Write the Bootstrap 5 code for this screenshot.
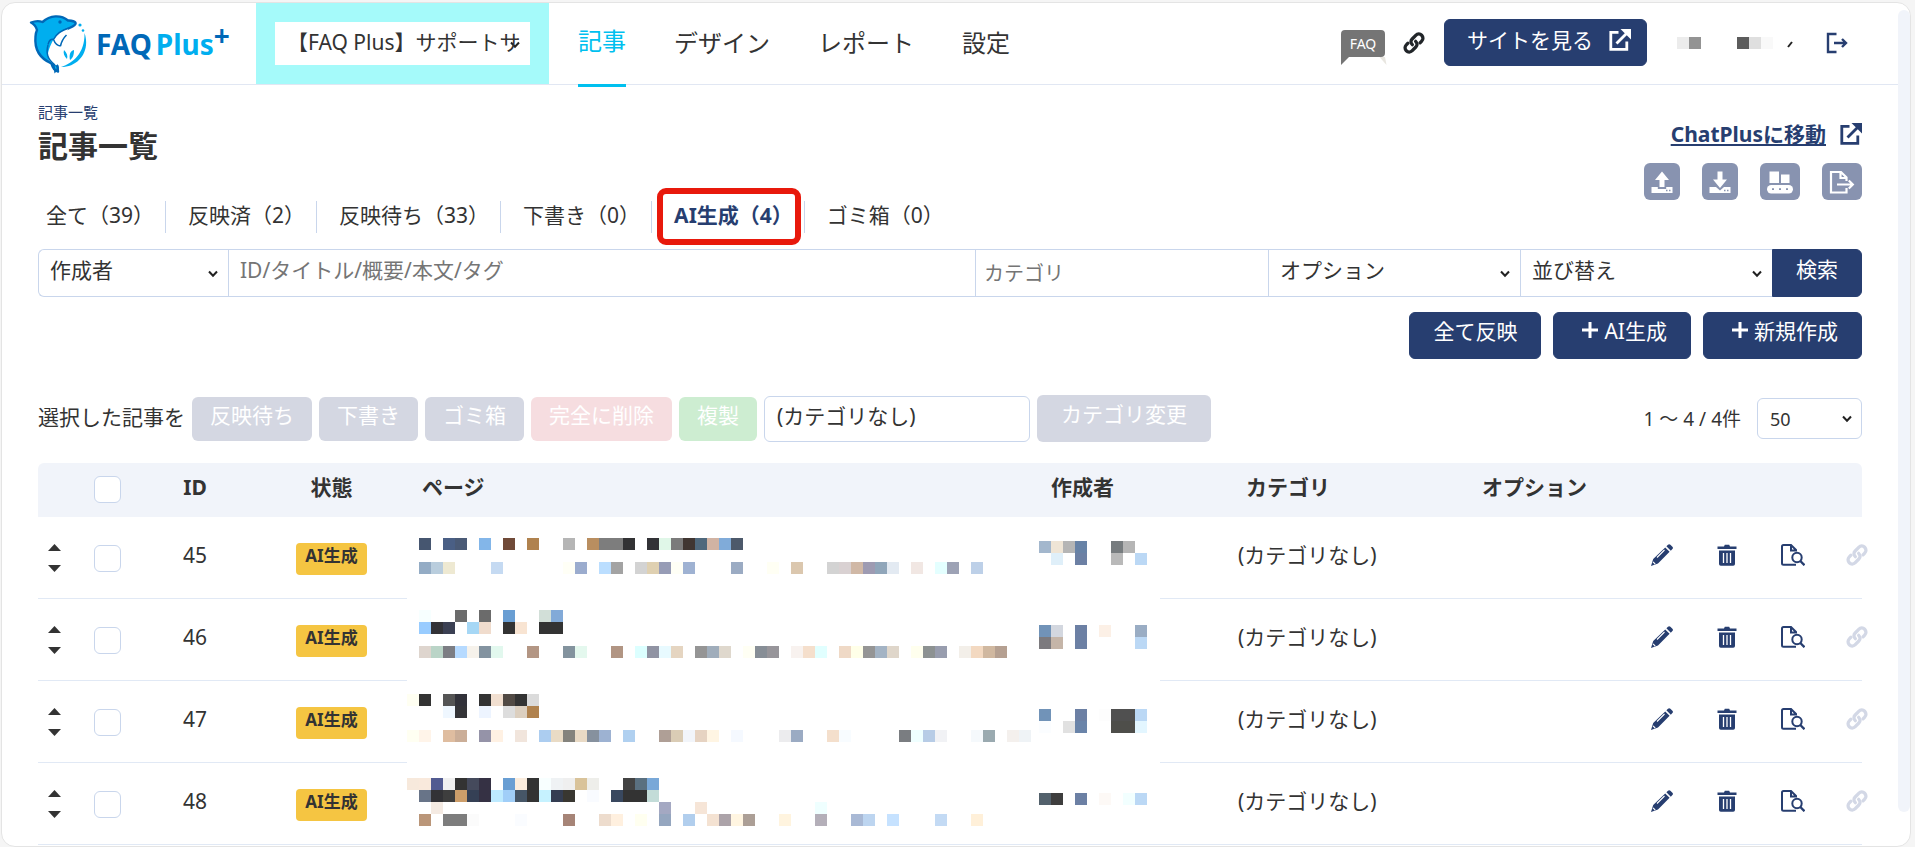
<!DOCTYPE html>
<html lang="ja">
<head>
<meta charset="utf-8">
<meta name="viewport" content="width=device-width, initial-scale=1">
<title>記事一覧 - FAQ Plus</title>
<link href="https://cdn.jsdelivr.net/npm/bootstrap@5.3.0/dist/css/bootstrap.min.css" rel="stylesheet">
<style>
:root { --navy:#273e70; --ink:#333; --line:#c9d6ec; --soft:#f1f4fa; --sky:#00c0ef; }
body { background:#f5f5f5; color:var(--ink); font-family:"Noto Sans","Noto Sans CJK JP",sans-serif; font-size:21px; line-height:28px; }
button, input, select { font-family:inherit; }
a { color:var(--navy); }
.app-frame { margin:2px 4px 0 1px; min-height:calc(100vh - 2px); background:#fff; border:1px solid #e4e4e4; border-radius:14px; }
.app-scroll { width:12px; margin:7px 0 34px; background:var(--soft); border-radius:6px; }
.app-header { height:82px; border-bottom:1px solid #e1e7f3; }
.brand-box { width:254px; padding-left:27px; }
.brand-box svg { width:58px; height:60px; }
.brand-name { font-weight:700; font-size:28px; line-height:36px; margin-left:9px; }
.brand-name sup { font-size:28px; line-height:0; top:-9px; }
.c-blue { color:#0068b7; } .c-cyan { color:#00aeef; }
.site-box { width:293px; background:#a5fafa; padding:19px; }
.form-select { --bs-form-select-bg-img:url("data:image/svg+xml,%3Csvg xmlns='http://www.w3.org/2000/svg' viewBox='0 0 10 8'%3E%3Cpath d='M1 1.5 5 5.8 9 1.5' fill='none' stroke='%23222' stroke-width='2'/%3E%3C/svg%3E"); background-size:10px 8px; }
.form-select, .form-control { font-size:21px; line-height:28px; color:var(--ink); border-color:var(--line); }
.form-control::placeholder { color:#757575; }
.site-box .form-select { height:43px; border:0; border-radius:0; padding:4px 10px 8px 12px; background-position:right 10px top 19px; text-overflow:clip; }
.main-nav { gap:48px; margin-left:29px; height:84px; }
.main-nav .nav-link { padding:22px 0 27px; color:var(--ink); font-size:24px; line-height:35px; }
.main-nav .nav-link.active { color:var(--sky); border-bottom:3px solid var(--sky); padding:20px 0 26px; }
.head-tools { padding:0 50px 2px 0; }
.icon-btn { background:none; border:0; padding:0; line-height:0; color:var(--navy); }
.icon-btn svg { width:22px; height:22px; }
.icon-btn .faq-bubble { width:46px; height:36px; margin-top:10px; }
.icon-btn .doc-icon { width:24px; }
.btn-navy { --bs-btn-bg:var(--navy); --bs-btn-color:#fff; --bs-btn-border-color:var(--navy); --bs-btn-hover-bg:#1d3059; --bs-btn-hover-color:#fff; }
.btn { font-size:21px; line-height:28px; border-radius:6px; padding:4px 23px 13px; }
.btn.view-btn { margin-left:19px; padding:6px 15px 11px 22px; }
.view-btn svg { margin:-5px 0 0 16px; }
.btn.add-btn { padding-left:28px; }
.add-btn svg { margin:-6px 6px 0 0; }
.tool-btn { background:#8893b0; border:0; border-radius:6px; height:37px; width:36px; padding:0; line-height:0; color:#fff; }
.tool-btn.wide { width:40px; }
.crumb { font-size:15px; line-height:20px; text-decoration:none; }
h1 { font-size:30px; line-height:40px; font-weight:700; margin:4px 0 0; }
.main-area { padding:17px 36px 0 36px; }
.head-side { padding-top:18px; }
.tabs-row { margin-top:35px; }
.tabs-row .nav-item { border-right:1px solid var(--line); padding:0 3px 0 14px; height:32px; line-height:28px; }
.tabs-row .nav-item:first-child { padding-left:0; }
.tabs-row .nav-item:last-child { border:0; }
.tabs-row .nav-link { color:var(--ink); padding:0 8px; line-height:28px; }
.tabs-row .nav-link.active { color:var(--navy); font-weight:700; }
.tab-mark { position:absolute; inset:-13px 3px -12px 5px; border:6px solid #e8190c; border-radius:9px; pointer-events:none; }
.search-row { margin-top:16px; height:48px; }
.search-row > * { height:48px; border-radius:0; }
.search-row .form-select, .search-row .form-control { border-right-width:0; padding:4px 10px 10px 11px; }
.search-row .form-select { background-position:right 10px top 20px; }
.search-row > :first-child { border-radius:6px 0 0 6px; }
.search-row .form-control.cat { font-size:20px; padding:8px; }
.search-row > :last-child { border-radius:0 6px 6px 0; }
.w-author { flex:0 0 190px; } .w-cat { flex:0 0 293px; } .w-opt { flex:0 0 252px; }
.bulk-row { margin-top:36px; gap:7px; }
.bulk-row .btn { padding:3px 17px 11px; border:1px solid transparent; opacity:1; color:#fff; height:44px; }
.b-gray.btn { background:#d4d7e2; } .b-pink.btn { background:#f6dde0; } .b-green.btn { background:#cdedd1; }
.bulk-row .btn.b-tall { height:47px; padding:4px 23px 13px; }
.bulk-row .form-control { width:266px; height:46px; padding:3px 12px 11px; border-radius:6px; }
.pager { font-size:19px; }
.pager .form-select { width:105px; height:41px; font-size:18px; padding:5px 12px; border-radius:6px; background-position:right 9px center; }
.art-table { table-layout:fixed; width:100%; margin-top:21px; border-collapse:separate; border-spacing:0; }
.art-table th { background:var(--soft); height:54px; padding:0 0 6px; }
.art-table th:first-child { border-radius:6px 0 0 0; } .art-table th:last-child { border-radius:0 6px 0 0; }
.art-table td { height:82px; padding:0; border-bottom:1px solid #e1e9f5; }
.art-table tr:not(:last-child) td.veil { border-bottom-color:transparent; }
.art-table td.veil { line-height:0; vertical-align:top; }
.art-table td.up { padding-bottom:6px; }
.art-table .form-check-input { width:27px; height:27px; margin:0; border-color:var(--line); border-radius:6px; display:inline-block; vertical-align:middle; }
.art-table th .form-check-input { margin-top:5px; }
.status-tag { display:inline-block; background:#f5c542; border-radius:4px; font-weight:700; font-size:17px; line-height:24px; padding:1px 9px 7px; margin-top:2px; }
.row-tools { gap:43px; padding-left:21px; }
.row-tools .icon-btn { width:22px; }
.sort-btns { gap:14px; }
</style>
</head>
<body>
<svg class="d-none">
  <symbol id="i-link" viewBox="0 0 24 24"><g fill="none" stroke="currentColor" stroke-width="3.600" stroke-linecap="round"><path d="M10.200 13.800c-2-2-2-4.400-.2-6.200l3.900-4c1.900-1.900 4.700-1.900 6.500-.1s1.800 4.600 0 6.400l-1.800 1.900"/><path d="M13.800 10.200c2 2 2 4.400.2 6.200l-3.900 4c-1.900 1.900-4.700 1.900-6.500.1s-1.800-4.600 0-6.400l1.800-1.900"/></g></symbol>
  <symbol id="i-ext" viewBox="0 0 22 22"><g fill="none" stroke="currentColor" stroke-width="2.800"><path d="M9.500 3.400H1.800v17h16V12.500"/><path d="M7.500 14.500 19 3"/></g><path d="M11.500 0H22v10.500l-3.500-3.500-3.500-3.500z" fill="currentColor"/></symbol>
  <symbol id="i-out" viewBox="0 0 22 22"><g fill="none" stroke="currentColor" stroke-width="2.400"><path d="M10.500 2H2v18h8.500"/><path d="M8 11h12M16 7l4 4-4 4"/></g></symbol>
  <symbol id="i-pen" viewBox="0 0 22 22"><path fill="currentColor" d="m15.400 2.300 1.600-1.600q1.200-1 2.400 0l2 2q1.100 1.200 0 2.400l-1.600 1.600zM14.200 3.400l4.400 4.400L7 19.600 0 22l2.200-7z"/><path d="M6 13.500 13.500 6M2 17.800 4.200 20" stroke="#fff" stroke-width="1.100"/></symbol>
  <symbol id="i-trash" viewBox="0 0 22 22"><path fill="currentColor" d="M1.500 2.500H8L8.800.7h4.400l.8 1.800h6.500V5h-19zM3 6.500h16V20q0 1.800-1.800 1.800H4.800Q3 21.800 3 20z"/><path d="M7.500 9v10M11 9v10M14.500 9v10" stroke="#fff" stroke-width="1.300"/></symbol>
  <symbol id="i-doc" viewBox="0 0 24 22"><g fill="none" stroke="currentColor" stroke-width="2"><path d="M15 20.800H2.500Q1 20.800 1 19.300V2.500Q1 1 2.500 1H10l5 5v1.500M10 1v5.500h4"/><circle cx="16" cy="13.500" r="4.700"/><path d="m19.300 17 4.200 4.200" stroke-width="2.400"/></g></symbol>
  <symbol id="i-up" viewBox="0 0 24 24"><path fill="currentColor" d="M12 1.500 5 10h4.500v7h5v-7H19zM1.500 17h6.300v2h8.400v-2h6.300v6h-21z"/><path d="M16 20.500h1.500M19 20.500h1.500" stroke="#8893b0" stroke-width="1.300"/></symbol>
  <symbol id="i-down" viewBox="0 0 24 24"><path fill="currentColor" d="M9.500 1.500h5v8H19L12 18 5 9.500h4.500zM1.500 17H8l4 3.500 4-3.500h6.500v6h-21z"/><path d="M16 20.500h1.500M19 20.500h1.500" stroke="#8893b0" stroke-width="1.300"/></symbol>
  <symbol id="i-belt" viewBox="0 0 28 24"><path fill="currentColor" d="M3.500 1.500h9.500V13H3.500zM15 4.500h8.500V13H15z"/><rect x="1" y="15" width="26" height="8.500" rx="4.200" fill="currentColor"/><path d="M6 19.200h2M13 19.200h2M20 19.200h2" stroke="#8893b0" stroke-width="1.800"/></symbol>
  <symbol id="i-exp" viewBox="0 0 26 24"><g fill="none" stroke="currentColor" stroke-width="2.200"><path d="M17.500 18v4.500H2V2h10l5.500 5.500V11M11.500 2v6h6M8 14.500h15.500M19.800 10.500l4 4-4 4"/></g></symbol>
  <symbol id="i-plus" viewBox="0 0 16 16"><path d="M8 0v16M0 8h16" stroke="currentColor" stroke-width="3"/></symbol>
</svg>

<div class="app-frame d-flex">
  <div class="flex-grow-1">
    <header class="app-header d-flex">
      <a class="brand-box d-flex align-items-center text-decoration-none" href="#" aria-label="FAQ Plus">
        <svg viewBox="0 0 58 60" aria-hidden="true">
          <path d="M2 8.500c5-2 9-1.500 11.500-.5C21 1 32 .5 39 6.500c3 .3 6 .5 7.500 2 1 1.800-1.500 3.500-6 5.500-6 2.500-9 4.500-12 9-4 6-7 11-7 17 0 5 4 10 7 12l.5 5.500c-4-1-5.500-4-6.500-8C9 43.500 5.500 33 6.500 22.500c.2-3 .8-5 1.500-6.500-1-3.500-3-6-6-7.500z" fill="#00aeef" stroke="#0068b7" stroke-width="2.400" stroke-linejoin="round"/>
          <path d="M39.500 14.500c-10 2.500-15 10-17.500 16-6 13-3 17 5.500 21 6-9 3-13-3-16 4-3 7-1.500 8.500-8 3-6 4-9 6.500-13z" fill="#fff"/>
          <path d="M40 14c-7 2-12.500 5.500-15.500 11.500-2-1-4.500.5-5.500 5M24.500 25.500c1.500 4 3 6 7 6.500M31.500 32c1-5 3-8 6-11M19 31c-2 8-1 14 7 20M27 52c3 1 2.500 3-1 6l-1-6-4-3" fill="none" stroke="#0068b7" stroke-width="1.500"/>
          <circle cx="31" cy="8" r="1.700" fill="#0068b7"/><circle cx="51" cy="11" r="1.600" fill="#00aeef"/><circle cx="54" cy="16.500" r="1.300" fill="#00aeef"/>
          <path d="M55.500 19c6 17-5 34-23.500 34 13-4 24-15 23.500-34z" fill="#00aeef"/>
          <path d="M38 45c-3-3-4-6-3-9 3 3 4 6 3 9zM41 46c-1-5 0-9 4-10 0 5-1 8-4 10z" fill="#00aeef"/>
        </svg>
        <span class="brand-name text-nowrap"><span class="c-blue">FAQ</span><span class="c-cyan ms-1">Plus</span><sup class="c-blue">+</sup></span>
      </a>
      <div class="site-box">
        <select class="form-select" aria-label="サイト"><option>【FAQ Plus】サポートサイト</option></select>
      </div>
      <nav class="nav main-nav flex-nowrap text-nowrap">
        <a class="nav-link active" href="#">記事</a>
        <a class="nav-link" href="#">デザイン</a>
        <a class="nav-link" href="#">レポート</a>
        <a class="nav-link" href="#">設定</a>
      </nav>
      <div class="head-tools d-flex align-items-center ms-auto">
        <button class="icon-btn" aria-label="FAQ"><svg class="faq-bubble" viewBox="0 0 46 36"><path d="M8 27h36l1.500 8-7-8z" fill="#e8e6e0"/><path d="M4 0h36q4 0 4 4v19q0 4-4 4H8l-8 8V4q0-4 4-4z" fill="#757575"/><text x="22" y="19" text-anchor="middle" font-size="14" fill="#fff">FAQ</text></svg></button>
        <button class="icon-btn text-dark ms-3" aria-label="リンク"><svg><use href="#i-link"/></svg></button>
        <a class="btn btn-navy view-btn text-nowrap" href="#">サイトを見る<svg width="22" height="22"><use href="#i-ext"/></svg></a>
        <svg width="116" height="12" style="margin-left:30px" class="mosaic" data-cells="0,0,ececec;1,0,939393;5,0,5c5c5c;6,0,dfdfdf;7,0,f9f9f9"><path d="m111 10 4-5" stroke="#222" stroke-width="2"/></svg>
        <button class="icon-btn" style="margin-left:33px" aria-label="ログアウト"><svg><use href="#i-out"/></svg></button>
      </div>
    </header>

    <main class="main-area">
      <div class="d-flex justify-content-between">
        <div>
          <a class="crumb d-block" href="#">記事一覧</a>
          <h1>記事一覧</h1>
          <ul class="nav tabs-row text-nowrap">
            <li class="nav-item"><a class="nav-link" href="#">全て（39）</a></li>
            <li class="nav-item"><a class="nav-link" href="#">反映済（2）</a></li>
            <li class="nav-item"><a class="nav-link" href="#">反映待ち（33）</a></li>
            <li class="nav-item"><a class="nav-link" href="#">下書き（0）</a></li>
            <li class="nav-item position-relative"><a class="nav-link active" href="#">AI生成（4）</a><span class="tab-mark"></span></li>
            <li class="nav-item"><a class="nav-link" href="#">ゴミ箱（0）</a></li>
          </ul>
        </div>
        <div class="head-side d-flex flex-column align-items-end">
          <div class="d-flex align-items-center"><a class="fw-bold" href="#">ChatPlusに移動</a><button class="icon-btn" style="margin-left:14px" aria-label="新しいタブで開く"><svg><use href="#i-ext"/></svg></button></div>
          <div class="d-flex" style="gap:22px;margin-top:15px">
            <button class="tool-btn" aria-label="アップロード"><svg width="24" height="24"><use href="#i-up"/></svg></button>
            <button class="tool-btn" aria-label="ダウンロード"><svg width="24" height="24"><use href="#i-down"/></svg></button>
            <button class="tool-btn wide" aria-label="一括処理"><svg width="28" height="24"><use href="#i-belt"/></svg></button>
            <button class="tool-btn wide" aria-label="出力"><svg width="26" height="24"><use href="#i-exp"/></svg></button>
          </div>
        </div>
      </div>

      <form class="search-row d-flex">
        <select class="form-select w-author" aria-label="作成者"><option>作成者</option></select>
        <input class="form-control flex-grow-1 w-auto" type="text" aria-label="キーワード" placeholder="ID/タイトル/概要/本文/タグ">
        <input class="form-control w-cat cat" type="text" aria-label="カテゴリ" placeholder="カテゴリ">
        <select class="form-select w-opt" aria-label="オプション"><option>オプション</option></select>
        <select class="form-select w-opt" aria-label="並び替え"><option>並び替え</option></select>
        <button class="btn btn-navy text-nowrap" type="button">検索</button>
      </form>

      <div class="d-flex justify-content-end" style="gap:12px;margin-top:15px">
        <button class="btn btn-navy">全て反映</button>
        <button class="btn btn-navy add-btn"><svg width="16" height="16"><use href="#i-plus"/></svg>AI生成</button>
        <button class="btn btn-navy add-btn"><svg width="16" height="16"><use href="#i-plus"/></svg>新規作成</button>
      </div>

      <div class="bulk-row d-flex align-items-center text-nowrap">
        <span class="pb-1">選択した記事を</span>
        <button class="btn b-gray" disabled>反映待ち</button>
        <button class="btn b-gray" disabled>下書き</button>
        <button class="btn b-gray" disabled>ゴミ箱</button>
        <button class="btn b-pink" disabled>完全に削除</button>
        <button class="btn b-green" disabled>複製</button>
        <input class="form-control" type="text" value="(カテゴリなし)" aria-label="変更先カテゴリ">
        <button class="btn b-gray b-tall" disabled>カテゴリ変更</button>
        <div class="pager d-flex align-items-center ms-auto gap-3"><span>1 〜 4 / 4件</span>
          <select class="form-select" aria-label="表示件数"><option>50</option></select></div>
      </div>

      <table class="art-table">
        <colgroup><col style="width:42px"><col style="width:54px"><col style="width:122px"><col style="width:151px"><col><col style="width:123px"><col style="width:306px"><col style="width:164px"><col style="width:232px"></colgroup>
        <thead><tr>
          <th></th><th class="text-center"><input class="form-check-input" type="checkbox" aria-label="全て選択"></th>
          <th class="text-center">ID</th><th class="text-center">状態</th><th style="padding-left:15px">ページ</th><th style="padding-left:14px">作成者</th>
          <th style="padding-left:86px">カテゴリ</th><th style="padding-left:16px">オプション</th><th></th>
        </tr></thead>
        <tbody id="rows"></tbody>
      </table>
    </main>
  </div>
  <div class="app-scroll flex-shrink-0"></div>
</div>

<script>
// Redacted text is drawn as 12px blocks; each entry is [offset from the row top, "column:colour ..."].
const articles = [
 {id:45, page:[[21,"1:465670 3:4a5f85 4:4a5a76 6:83b6e9 8:704a38 10:b0824e 13:b5b5b5 15:b98e60 16:7d7d7d 17:7d7d7d 18:323234 20:323236 21:e0f7e8 22:7b7b7b 23:403632 24:4f687c 25:d1b3a3 26:80abd9 27:4d596b"],
   [45,"1:94acc5 2:b9cddd 3:eee9d2 7:c5daf2 13:fffff6 14:9bacce 16:bbdeff 17:a3a3a3 19:d3d3d3 20:dfd0b1 21:979cb6 22:fffff6 23:9fb2d2 27:9babc3 30:fffff4 32:dbc7ae 35:d3d3d3 36:d9d1d2 37:d0b8a6 38:9e9bb2 39:90a6ba 40:e3eaf2 42:f1e7e3 44:e4ffff 45:9da2b5 47:bdd0e8"]],
  author:[[24,"0:a3b7cd 1:efe5d6 2:b5b5b5 3:6782a6 6:777c7f 7:b5b5b5"],[36,"1:dfeff9 3:6c80a4 6:b9b9b9 8:bbd8f5"]]},
 {id:46, page:[[11,"1:f7ffff 4:6b6b6b 6:6b6b6b 8:699ed3 11:d2dfd8 12:82aad8"],
   [23,"1:98ccff 2:323237 3:3b4053 5:a6d7f5 6:f0dccd 8:333333 9:f8e4d2 11:333333 12:333333"],
   [47,"1:ded5ce 2:bad4c7 3:7c7d83 4:b6daff 5:f6f2eb 6:8393a0 7:e2f8ee 10:b39684 13:83939e 14:e4f8ee 17:b19583 19:dcffff 20:9093a3 21:e8faff 22:e5d5c1 24:959595 25:a0adbb 26:dfd8cd 28:fffff4 29:878e96 30:97959a 32:f8f2ef 33:f5dfcc 34:e1ffff 36:efd9c6 37:ffffe8 38:959595 39:a3b3c4 40:dfd6ca 42:ffffee 43:8d9292 44:989dae 46:f3efe9 47:f3d9c1 48:d0b8a0 49:b5a091"]],
  author:[[26,"0:7193b8 1:d3d7df 3:6c80a4 5:fcf0e6 8:9aadc4"],[38,"0:7c7a7e 1:c5b5a8 3:6c80a4 8:bbd8f5"]]},
 {id:47, page:[[13,"0:fffff2 1:333333 3:555555 4:32323a 6:333333 7:f1dfd0 8:514a44 9:333333 10:dbdbdb"],
   [25,"3:eff7ff 4:343438 6:edf4ff 8:dddddd 9:dccfbf 10:b0824e"],
   [49,"0:fffff2 1:fff4e9 3:dfbda0 4:cbae98 6:9593a8 7:fff1e3 9:f1e5dc 11:accdf0 12:e9dbc5 13:84837d 14:e9dac5 15:86919e 16:9db2d2 18:b0d0f0 21:af9f96 22:daccb5 23:f2f5fa 24:e6d3c2 25:fff5e3 27:f5f9ff 31:ececee 32:9babc3 35:f4dfcc 36:f8fcff 41:7a7d81 42:efffff 43:b7cce6 44:f1f2f5 47:f5f9fc 48:9aaab0 50:f4f0ed 51:eff3f6"]],
  author:[[28,"0:7193b8 3:6c80a4 5:fdfdfd 6:505050 7:505050 8:bbd8f5"],[40,"0:fbfdff 2:e1e1e1 3:6a84a9 6:4e4e4a 7:4e4e4a 8:e3f6ff"]]},
 {id:48, page:[[15,"0:f7e9dc 1:f9e9dc 2:525b91 3:f0f0f0 4:333333 5:454a5c 6:353144 8:699ed3 9:faecdd 10:333333 11:f8ffff 12:eff2f4 13:efefef 14:d9c39a 15:eeeeea 18:434343 19:5a7080 20:79a8d8"],
   [27,"1:687488 2:323236 3:3e3e3e 4:cd9e6a 5:354055 6:353144 7:bdeaff 8:a0cef8 9:465667 10:333333 11:c6f2ff 12:343d52 13:393731 15:f9fbff 17:39485f 18:333333 19:333333 20:c3dcd8"],
   [39,"2:f4eae2 21:a4a8c2 24:f6e5d7 34:efffff"],
   [51,"1:ba9679 3:7d7d7d 4:7d7d7d 5:fbfbfb 9:fafcff 13:a68477 16:eddccd 17:fff0df 19:fffff0 21:95a6bf 23:b1ceed 25:f4e2d2 26:aca3a9 27:fff5e1 28:ac9f96 31:fff4df 34:b4afb9 37:a9b9d5 38:bdd5f0 40:c6e2ff 44:c3daf4 47:fff0d9"]],
  author:[[30,"0:53616c 1:3e3e3e 3:6c80a4 5:fdf9f6 7:f2ffff 8:bbd8f5"]]}
];
const blocks = (lines, cols, inset) => `<svg width="${cols*12+inset}" height="66">` + lines.map(([y, s]) => s.split(" ").map(c => {
  const [x, f] = c.split(":");
  return `<rect x="${x*12+inset}" y="${y}" width="12" height="12" fill="#${f}" shape-rendering="crispEdges"/>`;
}).join("")).join("") + "</svg>";
const tool = (icon, label, extra = "") => `<button class="icon-btn" aria-label="${label}" ${extra}><svg class="${icon}-icon"><use href="#i-${icon}"/></svg></button>`;
document.getElementById("rows").innerHTML = articles.map(a => `<tr>
  <td><div class="sort-btns d-flex flex-column align-items-center" style="padding-right:10px">
    <button class="icon-btn text-dark" aria-label="上へ"><svg style="width:13px;height:7px"><path d="M0 7 6.500 0 13 7z" fill="#333"/></svg></button>
    <button class="icon-btn text-dark" aria-label="下へ"><svg style="width:13px;height:7px"><path d="M0 0h13L6.500 7z" fill="#333"/></svg></button></div></td>
  <td class="text-center"><input class="form-check-input" type="checkbox" aria-label="${a.id}を選択"></td>
  <td class="text-center up">${a.id}</td>
  <td class="text-center"><span class="status-tag">AI生成</span></td>
  <td class="veil">${blocks(a.page, 52, 0)}</td>
  <td class="veil">${blocks(a.author, 9, 2)}</td>
  <td class="up" style="padding-left:78px">(カテゴリなし)</td><td></td>
  <td class="up"><div class="row-tools d-flex">${tool("pen","編集")}${tool("trash","削除")}${tool("doc","プレビュー")}${tool("link","リンク",'disabled style="color:#d3d8e6"')}</div></td>
</tr>`).join("");
document.querySelectorAll(".mosaic").forEach(m => {
  m.insertAdjacentHTML("afterbegin", m.dataset.cells.split(";").map(c => {
    const [x, y, f] = c.split(",");
    return `<rect x="${x*12}" y="${y*12}" width="12" height="12" fill="#${f}"/>`;
  }).join(""));
});
</script>
<script src="https://cdn.jsdelivr.net/npm/bootstrap@5.3.0/dist/js/bootstrap.bundle.min.js"></script>
</body>
</html>
